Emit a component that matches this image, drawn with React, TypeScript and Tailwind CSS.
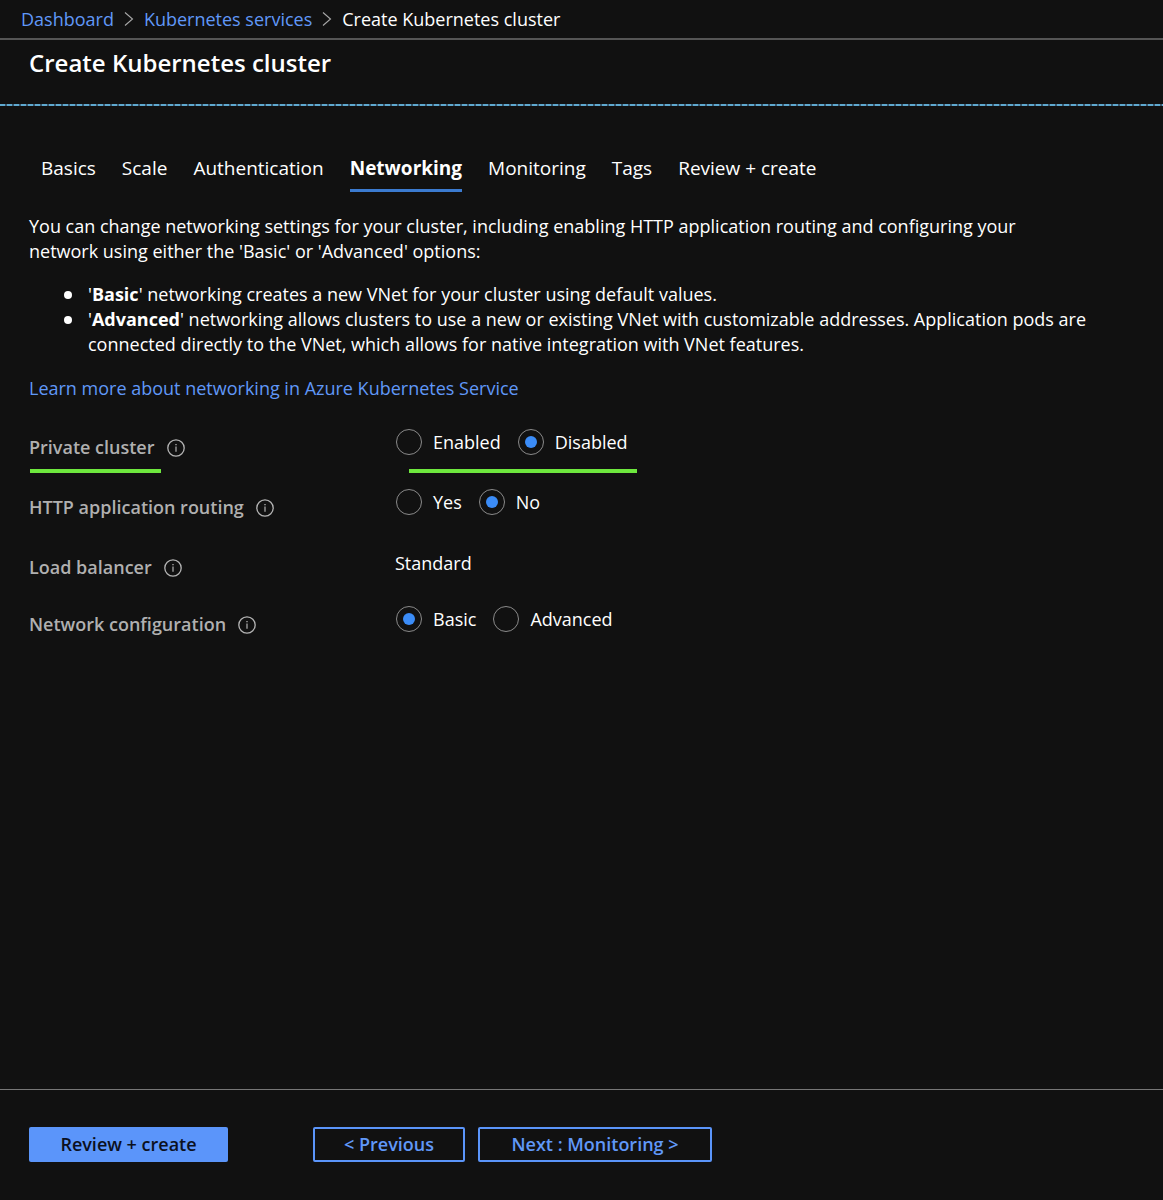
import React, { useState } from 'react'
import clsx from 'clsx'

const tabs = ['Basics', 'Scale', 'Authentication', 'Networking', 'Monitoring', 'Tags', 'Review + create']

const Chevron = () => (
  <svg className="w-[10px] h-4 shrink-0" viewBox="0 0 10 16" fill="none" stroke="#a8a8a8" strokeWidth="1.1" aria-hidden="true">
    <path d="M1 1.5 L8.5 8 L1 14.5" />
  </svg>
)

const InfoIcon = () => (
  <svg className="w-[18px] h-[18px] shrink-0" viewBox="0 0 18 18" fill="none" stroke="#b4b4b4" aria-hidden="true">
    <circle cx="9" cy="9" r="8.2" strokeWidth="1.3" />
    <path d="M9 7.6 V12.8" strokeWidth="1.2" />
    <path d="M9 5 V6.3" strokeWidth="1.3" />
  </svg>
)

const Bullet = ({ children }: { children: React.ReactNode }) => (
  <li className="flex gap-4 before:w-2 before:h-2 before:mt-[9px] before:shrink-0 before:rounded-full before:bg-white">
    <p>{children}</p>
  </li>
)

type RadioGroupProps = {
  name: string
  options: string[]
  value: string
  onChange: (value: string) => void
}

const RadioGroup = ({ name, options, value, onChange }: RadioGroupProps) => (
  <div className="flex gap-[17px] pl-px pb-2" role="radiogroup" aria-labelledby={name}>
    {options.map((option) => (
      <label key={option} className="flex items-center gap-[11px] cursor-pointer">
        <input
          type="radio"
          name={name}
          value={option}
          checked={value === option}
          onChange={() => onChange(option)}
          className="appearance-none w-[26px] h-[26px] rounded-full border border-[#8a8a8a] flex items-center justify-center before:w-3 before:h-3 before:rounded-full checked:before:bg-[#3b8cf7]"
        />
        {option}
      </label>
    ))}
  </div>
)

type FieldProps = {
  id: string
  label: string
  marked?: boolean
  children: React.ReactNode
}

const Field = ({ id, label, marked, children }: FieldProps) => (
  <div className="grid grid-cols-[366px_1fr] items-start">
    <div className="relative flex items-center gap-3 pt-[6px] text-[#b0b0b0]">
      <span id={id} className="font-semibold">{label}</span>
      <InfoIcon />
      {marked && <span className="absolute left-px top-10 w-[131px] h-1 bg-[#6ee83e]" />}
    </div>
    <div className="relative">
      {children}
      {marked && <span className="absolute left-[14px] top-10 w-[228px] h-1 bg-[#6ee83e]" />}
    </div>
  </div>
)

const App = () => {
  const [activeTab, setActiveTab] = useState<string>('Networking')
  const [privateCluster, setPrivateCluster] = useState<string>('Disabled')
  const [routing, setRouting] = useState<string>('No')
  const [network, setNetwork] = useState<string>('Basic')

  return (
    <div className="min-h-screen flex flex-col bg-[#111111] text-white font-['Open_Sans',sans-serif] text-[18px] leading-[25px]">
      <nav className="flex items-center gap-[10px] h-10 pl-[21px] border-b-2 border-[#555555]">
        <a href="#" className="text-[#6098f8]">Dashboard</a>
        <Chevron />
        <a href="#" className="text-[#6098f8]">Kubernetes services</a>
        <Chevron />
        <span>Create Kubernetes cluster</span>
      </nav>

      <header className="h-16 pl-[29px] pt-[7px]">
        <h1 className="text-[24px] leading-8 font-semibold">Create Kubernetes cluster</h1>
      </header>
      <div className="h-[2px] bg-[repeating-linear-gradient(90deg,#5fa9d0_0px,#5fa9d0_5px,#39566b_5px,#39566b_7px)]" />

      <main className="flex-1 pl-[29px] pr-[60px] pt-[50px]">
        <div className="flex gap-[26px] pl-3 text-[19px]" role="tablist">
          {tabs.map((tab) => (
            <button
              key={tab}
              role="tab"
              aria-selected={activeTab === tab}
              onClick={() => setActiveTab(tab)}
              className={clsx(
                'h-[36px] pb-[10px] border-b-3',
                activeTab === tab ? 'font-bold border-[#3b7bd0]' : 'border-transparent'
              )}
            >
              {tab}
            </button>
          ))}
        </div>

        <p className="mt-[22px] pr-5">
          You can change networking settings for your cluster, including enabling HTTP application routing and configuring your
          network using either the 'Basic' or 'Advanced' options:
        </p>
        <ul className="pl-[35px] mt-[18px]">
          <Bullet>'<b>Basic</b>' networking creates a new VNet for your cluster using default values.</Bullet>
          <Bullet>
            '<b>Advanced</b>' networking allows clusters to use a new or existing VNet with customizable addresses. Application pods are
            connected directly to the VNet, which allows for native integration with VNet features.
          </Bullet>
        </ul>
        <a href="#" className="inline-block mt-[19px] text-[#6098f8]">
          Learn more about networking in Azure Kubernetes Service
        </a>

        <div className="flex flex-col gap-[26px] mt-7">
          <Field id="private-cluster" label="Private cluster" marked>
            <RadioGroup name="private-cluster" options={['Enabled', 'Disabled']} value={privateCluster} onChange={setPrivateCluster} />
          </Field>
          <Field id="routing" label="HTTP application routing">
            <RadioGroup name="routing" options={['Yes', 'No']} value={routing} onChange={setRouting} />
          </Field>
          <Field id="load-balancer" label="Load balancer">
            <p className="leading-7">Standard</p>
          </Field>
          <Field id="network" label="Network configuration">
            <RadioGroup name="network" options={['Basic', 'Advanced']} value={network} onChange={setNetwork} />
          </Field>
        </div>
      </main>

      <footer className="flex items-start h-[111px] pl-[29px] pt-[37px] border-t border-[#777777] font-semibold">
        <button className="w-[199px] h-[35px] rounded-xs bg-[#5b95fa] text-[#0b1020]">Review + create</button>
        <button className="w-[152px] h-[35px] ml-[85px] rounded-xs border-2 border-[#5b95fa] text-[#6098f8]">&lt; Previous</button>
        <button className="w-[234px] h-[35px] ml-[13px] rounded-xs border-2 border-[#5b95fa] text-[#6098f8]">Next : Monitoring &gt;</button>
      </footer>
    </div>
  )
}

export default App
